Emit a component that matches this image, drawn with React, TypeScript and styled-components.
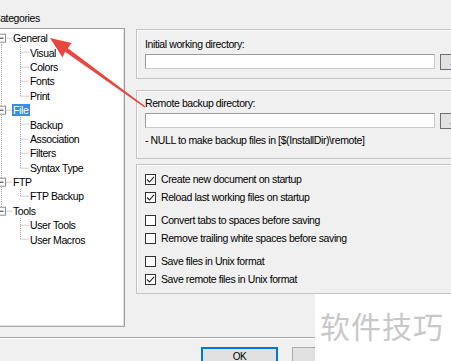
import React from 'react';
import styled, { createGlobalStyle } from 'styled-components';

const GlobalStyle = createGlobalStyle`
  html, body {
    margin: 0;
    padding: 0;
    background: #f0f0f0;
    overflow: hidden;
  }
  body {
    font-family: "Liberation Sans", Arial, sans-serif;
    font-size: 10.5px;
    letter-spacing: -0.4px;
    color: #000;
  }
`;

type Node = { label: string; children?: string[]; selected?: boolean };

const tree: Node[] = [
  { label: 'General', children: ['Visual', 'Colors', 'Fonts', 'Print'] },
  { label: 'File', selected: true, children: ['Backup', 'Association', 'Filters', 'Syntax Type'] },
  { label: 'FTP', children: ['FTP Backup'] },
  { label: 'Tools', children: ['User Tools', 'User Macros'] },
];

const ROW = 14.4;
const DOT = '#a3a3a3';

function RootGuide({ first, last }: { first: boolean; last: boolean }) {
  const mid = ROW / 2;
  return (
    <svg width={15} height={ROW} style={{ flexShrink: 0, overflow: 'visible' }}>
      <line x1={4.5} y1={first ? mid : 0} x2={4.5} y2={last ? mid : ROW} stroke={DOT} strokeDasharray="1 1" />
      <line x1={4.5} y1={mid} x2={15} y2={mid} stroke={DOT} strokeDasharray="1 1" />
      <rect x={0.5} y={mid - 4} width={8} height={8} fill="#fff" stroke="#8e8f8f" />
      <line x1={2.5} y1={mid} x2={6.5} y2={mid} stroke="#333" />
    </svg>
  );
}

function ChildGuide({ rootLine, lastChild }: { rootLine: boolean; lastChild: boolean }) {
  const mid = ROW / 2;
  return (
    <svg width={32} height={ROW} style={{ flexShrink: 0 }}>
      {rootLine && <line x1={4.5} y1={0} x2={4.5} y2={ROW} stroke={DOT} strokeDasharray="1 1" />}
      <line x1={23.5} y1={0} x2={23.5} y2={lastChild ? mid : ROW} stroke={DOT} strokeDasharray="1 1" />
      <line x1={23.5} y1={mid} x2={32} y2={mid} stroke={DOT} strokeDasharray="1 1" />
    </svg>
  );
}

function CheckMark() {
  return (
    <svg width={11} height={11} viewBox="0 0 11 11">
      <path d="M2 5.5 L4.5 8 L9 2.8" fill="none" stroke="#222" strokeWidth={1.1} />
    </svg>
  );
}

const checks = [
  { label: 'Create new document on startup', on: true, gap: false },
  { label: 'Reload last working files on startup', on: true, gap: false },
  { label: 'Convert tabs to spaces before saving', on: false, gap: true },
  { label: 'Remove trailing white spaces before saving', on: false, gap: false },
  { label: 'Save files in Unix format', on: false, gap: true },
  { label: 'Save remote files in Unix format', on: true, gap: false },
];

export default function App() {
  return (
    <Page>
      <GlobalStyle />
      <Content>
        <LeftColumn>
          <Caption>Categories</Caption>
          <TreeBox>
            {tree.map((node, i) => {
              const lastRoot = i === tree.length - 1;
              return (
                <React.Fragment key={node.label}>
                  <TreeRow>
                    <RootGuide first={i === 0} last={lastRoot} />
                    <NodeLabel selected={node.selected}>{node.label}</NodeLabel>
                  </TreeRow>
                  {node.children?.map((child, j) => (
                    <TreeRow key={child}>
                      <ChildGuide rootLine={!lastRoot} lastChild={j === node.children!.length - 1} />
                      <NodeLabel>{child}</NodeLabel>
                    </TreeRow>
                  ))}
                </React.Fragment>
              );
            })}
          </TreeBox>
        </LeftColumn>

        <RightColumn>
          <Group pt={8} pb={8}>
            <FieldLabel>Initial working directory:</FieldLabel>
            <InputRow>
              <TextInput />
              <BrowseButton>...</BrowseButton>
            </InputRow>
          </Group>

          <Group pt={6} pb={12} mt={11}>
            <FieldLabel>Remote backup directory:</FieldLabel>
            <InputRow>
              <TextInput />
              <BrowseButton>...</BrowseButton>
            </InputRow>
            <Note>- NULL to make backup files in [$(InstallDir)\remote]</Note>
          </Group>

          <Group pt={5} pb={5} mt={5}>
            {checks.map((c) => (
              <CheckRow key={c.label} gap={c.gap}>
                <CheckBox>{c.on && <CheckMark />}</CheckBox>
                <span>{c.label}</span>
              </CheckRow>
            ))}
          </Group>
        </RightColumn>
      </Content>

      <Separator />

      <ButtonBar>
        <DialogButton primary>OK</DialogButton>
        <DialogButton>Cancel</DialogButton>
      </ButtonBar>

      <Watermark>软件技巧</Watermark>

      <ArrowLayer width={451} height={361}>
        <polygon
          points="50,38 71.5,43 67.8,48.2 145.5,106.6 144.5,107.4 65.1,51.8 62.5,57.5"
          fill="#e8463f"
        />
      </ArrowLayer>
    </Page>
  );
}

const Page = styled.div`
  position: relative;
  width: 451px;
  height: 361px;
  overflow: hidden;
`;

const Content = styled.div`
  display: grid;
  grid-template-columns: 125px 340px;
  column-gap: 11px;
  align-items: start;
`;

const LeftColumn = styled.div`
  display: flex;
  flex-direction: column;
`;

const Caption = styled.div`
  height: 28px;
  box-sizing: border-box;
  padding-top: 12px;
  line-height: 12px;
  margin-left: -7px;
`;

const TreeBox = styled.div`
  margin-left: -4px;
  width: 129px;
  height: 299px;
  box-sizing: border-box;
  background: #fff;
  border: 1px solid #a0a0a0;
  border-right-color: #9a9a9a;
  border-bottom-color: #a8a8a8;
  box-shadow: inset -1px -1px 0 #e3e3e3;
  padding-top: 2px;
`;

const TreeRow = styled.div`
  display: flex;
  align-items: center;
  height: ${ROW}px;
`;

const NodeLabel = styled.span<{ selected?: boolean }>`
  display: inline-block;
  height: 12px;
  line-height: 12px;
  padding: 0 2px 0 1px;
  white-space: nowrap;
  background: ${({ selected }) => (selected ? '#3390ea' : 'transparent')};
  color: ${({ selected }) => (selected ? '#fff' : '#000')};
`;

const RightColumn = styled.div`
  display: flex;
  flex-direction: column;
  padding-top: 29px;
`;

const Group = styled.div<{ pt: number; pb: number; mt?: number }>`
  display: flex;
  flex-direction: column;
  margin-top: ${({ mt }) => mt || 0}px;
  padding: ${({ pt }) => pt}px 0 ${({ pb }) => pb}px 8px;
  border: 1px solid #c4c4c4;
  border-right: none;
  box-shadow: inset 1px 1px 0 #fafafa;
`;

const FieldLabel = styled.div`
  line-height: 12px;
  height: 12px;
`;

const InputRow = styled.div`
  display: flex;
  gap: 5px;
  margin-top: 4px;
`;

const TextInput = styled.div`
  width: 290px;
  height: 15px;
  box-sizing: border-box;
  background: #fff;
  border: 1px solid #9c9c9c;
  border-right-color: #c9c9c9;
  border-bottom-color: #c9c9c9;
`;

const BrowseButton = styled.div`
  width: 24px;
  height: 16px;
  box-sizing: border-box;
  background: #e1e1e1;
  border: 1px solid #6e6e6e;
  font-size: 8px;
  line-height: 16px;
  text-align: center;
  color: #444;
`;

const Note = styled.div`
  margin-top: 5px;
  line-height: 12px;
  height: 12px;
`;

const CheckRow = styled.div<{ gap: boolean }>`
  display: flex;
  align-items: center;
  gap: 5px;
  height: 18px;
  margin-top: ${({ gap }) => (gap ? 5 : 0)}px;
`;

const CheckBox = styled.div`
  width: 11px;
  height: 11px;
  box-sizing: border-box;
  border: 1px solid #333;
  background: #fff;
  display: flex;
  align-items: center;
  justify-content: center;
  overflow: hidden;
  svg {
    flex-shrink: 0;
  }
`;

const Separator = styled.div`
  margin-top: 10px;
  height: 1px;
  background: #a9a9a9;
  border-bottom: 1px solid #fdfdfd;
`;

const ButtonBar = styled.div`
  display: flex;
  gap: 14px;
  padding-left: 201px;
  margin-top: 8px;
`;

const DialogButton = styled.div<{ primary?: boolean }>`
  width: 77px;
  height: 22px;
  box-sizing: border-box;
  background: #e1e1e1;
  border: 1px solid ${({ primary }) => (primary ? '#0078d7' : '#adadad')};
  box-shadow: ${({ primary }) => (primary ? 'inset 0 0 0 1px #0078d7' : 'none')};
  text-align: center;
  line-height: 18px;
  font-size: 10px;
`;

const Watermark = styled.div`
  position: absolute;
  left: 315px;
  top: 294px;
  width: 136px;
  height: 67px;
  box-sizing: border-box;
  background: #fff;
  padding: 13px 0 0 5px;
  font-family: "Noto Sans CJK SC", "Noto Sans", sans-serif;
  font-size: 30px;
  line-height: 36px;
  letter-spacing: 1px;
  color: #c8c8c8;
`;

const ArrowLayer = styled.svg`
  position: absolute;
  left: 0;
  top: 0;
  pointer-events: none;
`;
